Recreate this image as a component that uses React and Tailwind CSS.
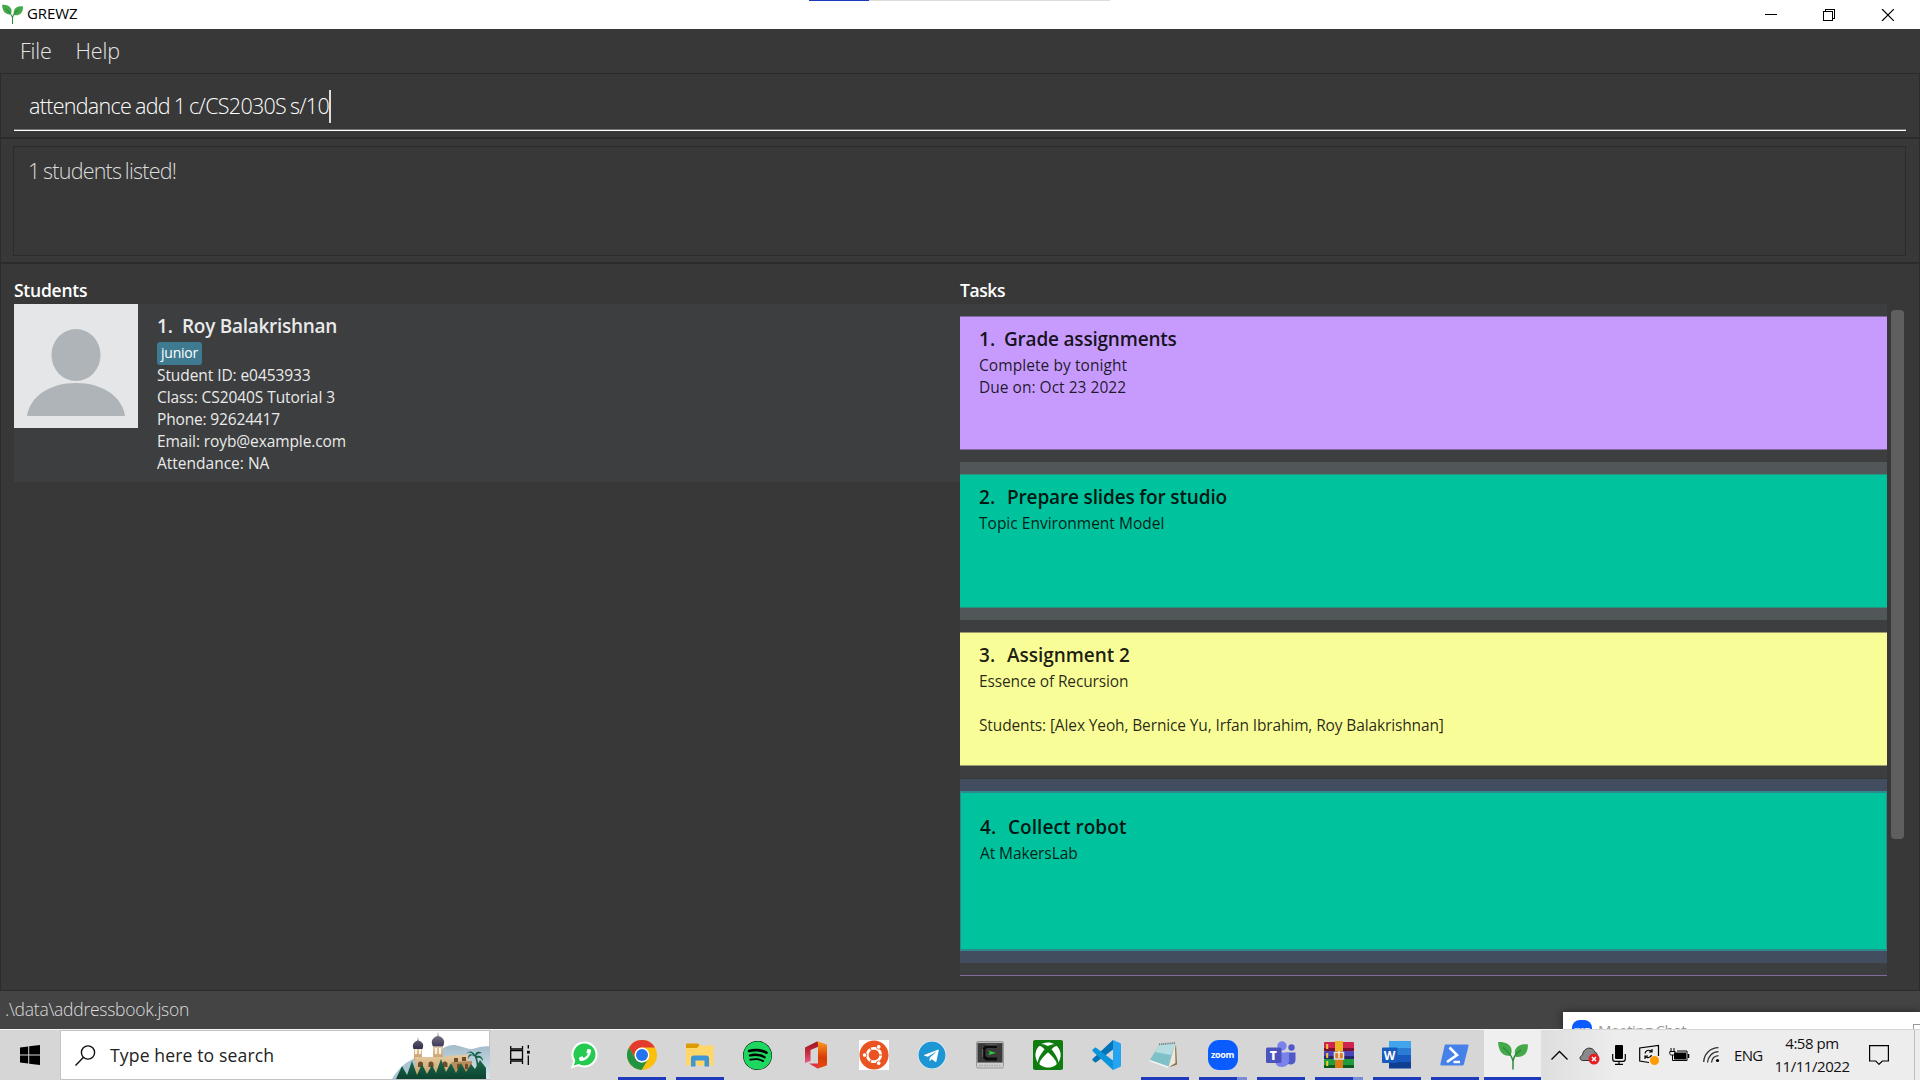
import React from "react";
import { FaXbox, FaSpotify, FaTelegram, FaUbuntu, FaPhoneAlt } from "react-icons/fa";

function Sprout({ size }) {
  return (
    <svg width={size} height={size} viewBox="0 0 30 30" fill="none">
      <path d="M0 1C6 .4 11.500 2.500 13.200 7c1 3 .2 5.500-.8 8C6.500 14.800.800 13 0 1Z" fill="#45a94c" />
      <path d="M30 3.500C23 2.500 18.500 5 17 9.500c-.6 2.400 0 4.500.8 6.500C25.500 16.500 30 13 30 3.500Z" fill="#45a94c" />
      <path d="M5 6.500c4.500 3.500 9 8.500 10 13.500v8.500M23 9c-4 2.200-7 6-8 11" stroke="#2f8a3d" strokeWidth="1.500" />
    </svg>
  );
}

function WhatsApp() {
  return (
    <div className="relative flex h-7 w-7 items-center justify-center">
      <svg width="28" height="28" viewBox="0 0 28 28" className="absolute inset-0">
        <path d="M14.500.5a13 13 0 1 1-6 24.500L1 27.500l2.200-7.500A13 13 0 0 1 14.500.5Z" fill="#fff" />
        <path d="M14.500 2.500a11 11 0 1 1-5.600 20.500l-5 1.500 1.400-5A11 11 0 0 1 14.500 2.500Z" fill="#25cb50" />
      </svg>
      <FaPhoneAlt size={12} className="relative left-[1px] -scale-x-100 text-white" />
    </div>
  );
}

function Chrome() {
  return (
    <svg width="30" height="30" viewBox="0 0 30 30">
      <circle cx="15" cy="15" r="15" fill="#fbbf0c" />
      <path d="M2 7.500A15 15 0 0 1 28 7.500H15A7.500 7.500 0 0 0 8.500 18.700Z" fill="#e33b2e" />
      <path d="M2 7.500A15 15 0 0 0 14.500 30L21.500 18.700A7.500 7.500 0 0 1 8.500 18.700Z" fill="#229342" />
      <circle cx="15" cy="15" r="7.400" fill="#fff" />
      <circle cx="15" cy="15" r="6" fill="#2374ee" />
    </svg>
  );
}

function Explorer() {
  return (
    <svg width="28" height="24" viewBox="0 0 28 24">
      <path d="M0 1.500C0 .7.700.5 1.500.5H12l1.500 1.500-2 3.500H0Z" fill="#dd9b02" />
      <path d="M0 5h11l2.500-2.500H27.500V22.500H0Z" fill="#ffd667" />
      <path d="M5 23.500V15c0-1.500 1-2.500 2.500-2.500h13c1.500 0 2.500 1 2.500 2.500v8.500h-4.500v-6H9.500v6Z" fill="#3d96d8" />
    </svg>
  );
}

function Office() {
  return (
    <svg width="24" height="28" viewBox="0 0 24 28">
      <defs>
        <linearGradient id="officeLeft" x1="0" y1="0" x2="0" y2="1">
          <stop offset="0" stopColor="#9c1422" />
          <stop offset=".5" stopColor="#c42a3a" />
          <stop offset="1" stopColor="#ec5a8a" />
        </linearGradient>
        <linearGradient id="officeRight" x1="0" y1="0" x2="0" y2="1">
          <stop offset="0" stopColor="#ff9a1e" />
          <stop offset=".6" stopColor="#d93a07" />
          <stop offset="1" stopColor="#e64a12" />
        </linearGradient>
      </defs>
      <path d="M1 6.500 13.500.2 16 5 6.500 9v11L1 22Z" fill="url(#officeLeft)" />
      <path d="M13.500.2 22 3.200c.8.300 1 .8 1 1.500v18.500c0 .8-.3 1.300-1 1.500L14 27.500V5Z" fill="url(#officeRight)" />
      <path d="M5 22.500H14v5.200Z" fill="#e0304a" />
    </svg>
  );
}

function Cygwin() {
  return (
    <svg width="28" height="28" viewBox="0 0 28 28">
      <rect x=".5" y=".5" width="27" height="26.500" rx="1.500" fill="#cfcfcf" stroke="#9b9b9b" />
      <rect x="1.500" y="2" width="25" height="19.500" fill="#3a3a3a" stroke="#777" strokeWidth=".5" />
      <path d="M21 5.500H10.500L8 8v7.500l2.500 2.500H21" fill="none" stroke="#0b0b0b" strokeWidth="2.800" />
      <path d="M9.500 4H21M6.700 8v8" fill="none" stroke="#8a8a8a" strokeWidth=".7" />
      <path d="M12 9.500 20 12l-8 2 2-2.200Z" fill="#22d83a" />
      <path d="M3 24.500h22" stroke="#aaa" strokeWidth="1.500" strokeDasharray="1.500 1" />
    </svg>
  );
}

function VsCode() {
  return (
    <svg width="30" height="30" viewBox="0 0 30 30">
      <path d="M22 0 2 18.500c-.8.700-.8 1.500 0 2.200l1.500 1.400c.6.500 1.400.5 2 0L24 8Z" fill="#0072b8" />
      <path d="M22 30 2 11.500c-.8-.7-.8-1.500 0-2.200l1.500-1.400c.6-.5 1.400-.5 2 0L24 22Z" fill="#0b94da" />
      <path d="M22 0 29 3c.8.400 1 1 1 1.700v20.600c0 .7-.2 1.300-1 1.700l-7 3Z" fill="#26a4f2" />
    </svg>
  );
}

function Notepad() {
  return (
    <svg width="30" height="28" viewBox="0 0 30 28">
      <path d="M27 3.500 28 23.500 21 26Z" fill="#8a6d45" />
      <path d="M26 2.500 26.500 22 20 26Z" fill="#ece8da" />
      <path d="M10.500 3.500 26 2.500 19.500 25.500.800 19Z" fill="#7fc0c9" />
      <path d="M10.500 3.500 26 2.500 22 14 6 11Z" fill="#b5dde1" />
      <path d="M.800 19 19.500 25.500 19 27 1 20.500Z" fill="#f4f4f0" />
      <path d="M10 3.300 26 2" stroke="#6c7a7c" strokeWidth="1.800" strokeDasharray="1 .9" />
    </svg>
  );
}

function Zoom() {
  return (
    <div className="flex h-[30px] w-[30px] items-center justify-center rounded-[11px] bg-[#0b5cff] pb-[2px] font-['Open_Sans',sans-serif] text-[9px] font-bold leading-none tracking-[-0.3px] text-white">
      zoom
    </div>
  );
}

function Teams() {
  return (
    <div className="relative h-7 w-[30px]">
      <svg width="30" height="28" viewBox="0 0 30 28" className="absolute inset-0">
        <circle cx="25.500" cy="6.500" r="3.200" fill="#5059c9" />
        <path d="M20 11.500h9.500V19a4.800 4.800 0 0 1-9 2Z" fill="#5059c9" />
        <circle cx="16" cy="5" r="4.700" fill="#7b83eb" />
        <path d="M9 11.500H23V20a7.200 7.200 0 0 1-14 1Z" fill="#7b83eb" />
        <rect y="6.500" width="15.500" height="15.500" rx="1.500" fill="#4b53bc" />
      </svg>
      <span className="absolute left-[4px] top-[7px] font-['Open_Sans',sans-serif] text-[12px] font-extrabold leading-[15px] text-white">T</span>
    </div>
  );
}

function WinRar() {
  return (
    <svg width="30" height="28" viewBox="0 0 30 28">
      <rect y="1" width="30" height="9" rx="1" fill="#cf2450" />
      <path d="M0 7h30v3H0Z" fill="#7d1030" />
      <rect y="10" width="30" height="8" rx="1" fill="#4b46b8" />
      <path d="M0 15h30v3H0Z" fill="#28256f" />
      <rect y="18" width="30" height="9" rx="1" fill="#1f9c3c" />
      <path d="M0 24h30v3H0Z" fill="#0c5a20" />
      <path d="M3.200 3v5M3.200 12v5M3.200 20v5" stroke="#f5c931" strokeWidth="2" />
      <rect x="11" y="0" width="8" height="27" fill="#d97a16" />
      <rect x="11" y="0" width="8" height="10" fill="#ecb325" />
      <rect x="10.500" y="11.500" width="9" height="6.500" fill="none" stroke="#dedede" strokeWidth="1.500" />
      <path d="M15 10v7" stroke="#eee" strokeWidth="1.500" />
    </svg>
  );
}

function Word() {
  return (
    <div className="relative h-7 w-[29px]">
      <svg width="29" height="28" viewBox="0 0 29 28" className="absolute inset-0">
        <rect x="7" width="22" height="7" fill="#41a5ee" />
        <rect x="7" y="7" width="22" height="7" fill="#2b7cd3" />
        <rect x="7" y="14" width="22" height="7" fill="#185abd" />
        <rect x="7" y="21" width="22" height="6.500" fill="#103f91" />
        <rect y="6.500" width="15.500" height="15.500" rx="1" fill="#185abd" />
      </svg>
      <span className="absolute left-[1.500px] top-[7px] font-['Open_Sans',sans-serif] text-[12px] font-bold leading-[15px] text-white">W</span>
    </div>
  );
}

function PowerShell() {
  return (
    <svg width="29" height="22" viewBox="0 0 29 22">
      <path d="M6 .5H27.200c1 0 1.500.7 1.300 1.500L24 20c-.2.900-.8 1.400-1.700 1.400H1.500C.6 21.400.200 20.800.400 20L4.500 2C4.700 1 5.200.5 6 .5Z" fill="#4681ea" />
      <path d="m9.500 3.500 7.500 7.500L7 18" fill="none" stroke="#fff" strokeWidth="2.600" />
      <path d="M13.500 18h6.500" stroke="#fff" strokeWidth="2.400" />
    </svg>
  );
}

const apps = [
  { icon: <WhatsApp /> },
  { icon: <Chrome />, open: true },
  { icon: <Explorer />, open: true },
  {
    icon: (
      <div className="rounded-full bg-black">
        <FaSpotify size={29} className="text-[#1ed760]" />
      </div>
    ),
  },
  { icon: <Office /> },
  {
    icon: (
      <div className="bg-[linear-gradient(#fff,#fff)]">
        <FaUbuntu size={30} className="text-[#e95420]" />
      </div>
    ),
  },
  {
    icon: (
      <div className="rounded-full bg-white">
        <FaTelegram size={28} className="text-[#1e96d4]" />
      </div>
    ),
  },
  { icon: <Cygwin /> },
  {
    icon: (
      <div className="flex h-[30px] w-[30px] items-center justify-center rounded-[2px] bg-[#107c10]">
        <FaXbox size={26} className="text-white" />
      </div>
    ),
  },
  { icon: <VsCode /> },
  { icon: <Notepad />, open: true },
  { icon: <Zoom />, open: true, many: true },
  { icon: <Teams />, open: true },
  { icon: <WinRar />, open: true, many: true },
  { icon: <Word />, open: true },
  { icon: <PowerShell />, open: true },
];

function Castle() {
  return (
    <svg width="98" height="48" viewBox="0 0 98 48">
      <defs>
        <linearGradient id="stone" x1="0" y1="0" x2="0" y2="1">
          <stop offset="0" stopColor="#e6cba0" />
          <stop offset="1" stopColor="#c39a66" />
        </linearGradient>
        <linearGradient id="dome" x1="0" y1="0" x2="0" y2="1">
          <stop offset="0" stopColor="#8a8694" />
          <stop offset="1" stopColor="#352d4c" />
        </linearGradient>
        <linearGradient id="hill" x1="0" y1="0" x2="0" y2="1">
          <stop offset="0" stopColor="#a3bccb" />
          <stop offset="1" stopColor="#dbe6ec" />
        </linearGradient>
        <linearGradient id="tree" x1="0" y1="0" x2="0" y2="1">
          <stop offset="0" stopColor="#1b6a4b" />
          <stop offset="1" stopColor="#0a3c2b" />
        </linearGradient>
      </defs>
      <path d="M45 22C52 16 58 13 65 14.500c7 1.500 12 5 19 2.500 6-1.500 11-2.500 15-1v32H45Z" fill="url(#hill)" />
      <path d="M0 48C6 38 14 30 24 27l20 21Z" fill="#a9c4d2" />
      <path d="M22 17h8v12h-8ZM41 16h10v13H41Z" fill="url(#stone)" />
      <path d="M24 18v5M28 18v5M44 17v6M48 17v6" stroke="#fff" strokeWidth="1.600" />
      <path d="M21.500 18c-1.500-4-.5-6.500 4-8.500l.5-3.500.5 3.500c5 2 5.500 4.500 4 8.500ZM41 15.500c-2-4-2-8.500 4.500-10.500L46 0l.5 5c6.500 2 6.500 6.500 4.500 10.500Z" fill="url(#dome)" />
      <path d="M23 26h31v-1l22-1.500v24.500H23Z" fill="url(#stone)" />
      <path d="M60 31l20-1v18H60Z" fill="#b98e5e" />
      <path d="M26 36v-3a2.500 2.500 0 0 1 5 0v3ZM36.500 36v-3a2.500 2.500 0 0 1 5 0v3ZM50.500 36v-3a2.500 2.500 0 0 1 5 0v3ZM62 27h4v4h-4ZM70 26h4v4h-4ZM65 38v-4a1.500 1.500 0 0 1 3 0v4ZM73 38v-4a1.500 1.500 0 0 1 3 0v4Z" fill="#6d4c2f" />
      <path d="M84 46c1.500-8 1-14-1-20-3-3-5-2-7 2 0-4 2-6 5-4-2-3-4-3-7-1 3-4 7-3 9 1 1-4 4-4 7-2-3 0-5 1-6 3 4-1 7 1 7 5-2-3-3-4-6-3 2 6 2 13 1 19Z" fill="#126048" />
      <path d="m4 48 6-13 5 9 5-14 5 14 5-11 5 10 5-9 4 8 5-14 5 13 5-9 5 10 5-10 5 9 5-8 4 5 5-9 6 8v15Z" fill="url(#tree)" />
    </svg>
  );
}

function TaskCell({ cell, card, children, tall }) {
  return (
    <li className={"py-3 " + cell}>
      <article className={(tall ? "h-40 border-2 border-x pt-[21px] pl-[19px] border-[#2c8a8f] " : "h-[134px] border-y pt-[9px] pl-[19px] ") + card}>{children}</article>
    </li>
  );
}

function TaskTitle({ n, gap, title, spacing }) {
  return (
    <h3 className="flex h-[26px] text-[19px] font-semibold leading-[26px] text-black/90">
      <span className={gap}>{n}.</span>
      <span className={spacing}>{title}</span>
    </h3>
  );
}

const line = "h-[22px] text-[15.5px] leading-[22px] whitespace-pre";

export default function App() {
  return (
    <div className="relative flex h-[1080px] w-[1920px] flex-col overflow-hidden bg-[#383838] font-['Open_Sans','Noto_Sans',sans-serif] whitespace-nowrap">
      {/* Title bar */}
      <header className="relative flex h-[29px] items-center bg-white pl-[2px] text-black">
        <Sprout size={21} />
        <span className="ml-[4px] text-[15px] leading-[27px] pb-[2px] tracking-[-0.1px]">GREWZ</span>
        <div className="absolute left-[809px] top-0 flex">
          <div className="h-px w-[60px] bg-[#1d39c0]" />
          <div className="h-px w-[241px] bg-[#dcdcdc]" />
        </div>
        <svg className="ml-auto mr-[26px]" width="129" height="12" viewBox="0 0 129 12" fill="none" stroke="#000" shapeRendering="crispEdges">
          <path d="M0 5.500h12" />
          <path d="M58.500 2.500h9v9h-9ZM60.500 2.500v-2h9v9h-2" />
          <path d="m117 0 12 12M129 0l-12 12" shapeRendering="auto" strokeWidth="1.200" />
        </svg>
      </header>

      {/* Menu */}
      <nav className="flex h-11 gap-[24px] pl-[20px] text-[21.5px] font-light leading-[44px] text-[#e6e6e6]">
        <span className="tracking-[-0.2px]">File</span>
        <span className="tracking-[-0.15px]">Help</span>
      </nav>

      {/* Command box */}
      <section className="h-[65px] border border-[#2b2b2b] px-[13px] pt-[16px]">
        <div className="flex h-10 border-b border-[#757575] pl-[15px]">
          <span className="mt-px h-[30px] text-[21.5px] font-light leading-[30px] tracking-[-0.7px] [word-spacing:-1.100px] text-white">attendance add 1 c/CS2030S s/10</span>
          <span className="h-[33px] w-[1.500px] bg-[#ddd]" />
        </div>
        <div className="h-px bg-white" />
      </section>

      {/* Result display */}
      <section className="h-[125px] border border-[#2b2b2b] pl-3 pr-[13px] pt-[7px]">
        <div className="h-[110px] border border-[#2b2b2b] pl-[14px] pt-[9px] text-[21.5px] font-light leading-[30px] tracking-[-0.78px] [word-spacing:-1.200px] text-[#dcdcdc]">
          1 students listed!
        </div>
      </section>

      {/* Lists */}
      <main className="flex h-[728px] border border-[#2b2b2b] pl-[13px] pt-[13px] pr-[13px]">
        <section className="w-[946px]">
          <h2 className="h-[27px] text-[17.5px] font-semibold leading-[27px] tracking-[-0.25px] text-white">Students</h2>
          <article className="flex h-[178px] bg-[#3c3e3f]">
            <svg width="124" height="124" viewBox="0 0 124 124">
              <rect width="124" height="124" fill="#e4e6e7" />
              <ellipse cx="62" cy="51" rx="24.500" ry="26" fill="#aeb4b7" />
              <path d="M13 112C16 92 36 79 62 79s46 13 49 33Z" fill="#aeb4b7" />
            </svg>
            <div className="pl-[19px] pt-[9px] text-[#eaeaea]">
              <h3 className="flex h-[26px] text-[19px] font-semibold leading-[26px]">
                <span className="w-[25px]">1.</span>
                <span className="tracking-[-0.28px]">Roy Balakrishnan</span>
              </h3>
              <div className="mt-[3px] flex h-[23px] w-[45px] justify-center rounded-[3px] bg-[#3e7b91] text-[14px] leading-[22px] tracking-[-0.2px] text-white">junior</div>
              <p className={line + " -mt-px tracking-[-0.08px]"}>Student ID: e0453933</p>
              <p className={line + " tracking-[-0.08px]"}>Class: CS2040S Tutorial 3</p>
              <p className={line + " tracking-[-0.16px]"}>Phone: 92624417</p>
              <p className={line + " tracking-[-0.1px]"}>Email: royb@example.com</p>
              <p className={line}>Attendance: NA</p>
            </div>
          </article>
        </section>

        <section className="w-[927px]">
          <h2 className="h-[27px] text-[17.5px] font-semibold leading-[27px] tracking-[-0.4px] text-white">Tasks</h2>
          <ul className="h-[672px] overflow-hidden text-black/85">
            <TaskCell cell="h-[158px] bg-[#3c3e3f]" card="bg-[#c79bfd] border-[#83699f]">
              <TaskTitle n="1" gap="w-[25px]" title="Grade assignments" spacing="tracking-[-0.2px]" />
              <p className={line + " mt-[2px] tracking-[0.07px]"}>Complete by tonight</p>
              <p className={line + " tracking-[0.02px]"}>Due on: Oct 23 2022</p>
            </TaskCell>
            <TaskCell cell="h-[158px] bg-[#515658]" card="bg-[#00c29c] border-[#2a8f7c]">
              <TaskTitle n="2" gap="w-[28px]" title="Prepare slides for studio" spacing="tracking-[-0.15px]" />
              <p className={line + " mt-[2px] tracking-[0.01px]"}>Topic Environment Model</p>
            </TaskCell>
            <TaskCell cell="h-[158px] bg-[#3c3e3f]" card="bg-[#f9fd98] border-[#9a9d69]">
              <TaskTitle n="3" gap="w-[28px]" title="Assignment 2" spacing="tracking-[-0.04px]" />
              <p className={line + " mt-[2px] tracking-[-0.13px]"}>Essence of Recursion</p>
              <p className={line + " mt-[22px] tracking-[-0.13px]"}>Students: [Alex Yeoh, Bernice Yu, Irfan Ibrahim, Roy Balakrishnan]</p>
            </TaskCell>
            <TaskCell tall cell="h-[185px] border-t border-[#373737] bg-[#424d5f]" card="bg-[#00c29c]">
              <TaskTitle n="4" gap="w-[28px]" title="Collect robot" spacing="tracking-[0.05px]" />
              <p className={line + " mt-[2px] tracking-[-0.09px]"}>At MakersLab</p>
            </TaskCell>
            <TaskCell cell="h-[158px] bg-[#3c3e3f]" card="bg-[#c79bfd] border-[#83699f]" />
          </ul>
        </section>
        <div className="ml-[3.500px] mt-[33px] h-[529px] w-[13.500px] rounded-[4px] bg-[#5f5f5f]" />
      </main>

      {/* Status bar */}
      <footer className="h-[38px] bg-[#444444] pl-[5px] text-[17.5px] font-light leading-[37px] tracking-[-0.26px] text-[#dedede]">.\data\addressbook.json</footer>

      {/* Meeting chat window peeking above the taskbar */}
      <div className="absolute left-[1563px] top-[1012px] flex h-[18px] w-[357px] overflow-hidden bg-white pl-[9px] pt-[8px] shadow-[0_0_8px_rgba(0,0,0,0.5)]">
        <span className="flex h-5 w-5 justify-center rounded-[8px] bg-[#0b5cff] text-[6px] font-bold leading-[18px] text-white">zoom</span>
        <span className="ml-[6px] text-[15px] leading-[20px] tracking-[-0.4px] text-[#999]">Meeting Chat</span>
        <div className="ml-auto mr-[46px] mt-[9px] h-px w-3 bg-[#999]" />
        <div className="mt-[4px] h-4 w-[7px] border-l border-t border-[#999]" />
      </div>

      {/* Taskbar */}
      <div className="relative flex h-[51px] bg-[#d6d6d6]">
        <div className="absolute left-0 top-0 h-px w-[1563px] bg-[#f4f4f4]" />
        <div className="flex w-[60px] items-center justify-center pt-px">
          <svg width="20" height="20" viewBox="0 0 20 20">
            <path d="m0 2.600 8.200-1.100v8H0ZM9.200 1.300 20 0v9.500H9.200ZM0 10.500h8.200v8L0 17.400ZM9.200 10.500H20V20L9.200 18.700Z" />
          </svg>
        </div>
        <div className="mt-px flex w-[430px] items-center border border-[#c4c4c4] bg-white pl-[14px] text-[#222]">
          <svg width="21" height="21" viewBox="0 0 21 21" fill="none" stroke="#111" strokeWidth="1.400">
            <circle cx="13" cy="7.500" r="6.600" />
            <path d="M8.500 12.300.500 20.500" />
          </svg>
          <span className="ml-[14px] text-[17.6px] leading-[48px] tracking-[0.12px]">Type here to search</span>
          <div className="-mr-px ml-auto self-end">
            <Castle />
          </div>
        </div>
        <div className="flex w-[64.500px] items-center pl-[20px]">
          <svg width="20" height="20" viewBox="0 0 20 20" fill="none" stroke="#000" strokeWidth="1.300">
            <path d="M.7 1v3h11.800V1M.7 19v-3h11.800v3M.7 5.700h11.800v8.600H.7ZM18.300 0v3.500M18.300 10.500V20" />
            <path d="M17 5.800h2.800v2.800H17Z" fill="#000" stroke="none" />
          </svg>
        </div>
        {apps.map((app, i) => (
          <div key={i} className="relative flex w-[58.1px] items-center justify-center pt-px">
            {app.icon}
            {app.open && (
              <div className="absolute bottom-0 left-[5.500px] flex h-[3px] w-12">
                <div className="flex-1 bg-[#1f3bbd]" />
                {app.many && <div className="w-[10px] bg-[#7a8cd8]" />}
              </div>
            )}
          </div>
        ))}
        <div className="flex w-[57px] flex-col items-center border-b-[3px] border-[#1f3bbd] bg-[#efefef] pt-[12px]">
          <Sprout size={30} />
        </div>

        {/* System tray */}
        <div className="mt-px flex flex-1 items-center bg-linear-to-r from-[#dedede] to-[#ededed] to-20% text-[#111]">
          <svg className="ml-[10px]" width="17" height="10" viewBox="0 0 17 10" fill="none" stroke="#000" strokeWidth="1.300">
            <path d="m.5 9.500 8-8 8 8" />
          </svg>
          <svg className="ml-[11px] mt-px" width="21" height="18" viewBox="0 0 21 18">
            <path d="M3.500 13.500C.5 13 0 9.500 3.500 8 4 3.500 7.500.700 11 1.200c3 .3 4 2 4.600 3.800 2.500.5 3 3 2.400 5l-4 3.500Z" fill="#8a8a8a" stroke="#333" />
            <circle cx="15" cy="12" r="5.500" fill="#e32028" />
            <path d="m13 10 4 4m0-4-4 4" stroke="#fff" strokeWidth="1.500" />
          </svg>
          <svg className="ml-[12px]" width="14" height="20" viewBox="0 0 14 20">
            <rect x="3" width="8" height="14" rx="1" />
            <path d="M.7 9v5c0 1.500 1 2.300 2.300 2.300h8c1.300 0 2.300-.8 2.300-2.300V9M7 16v3M3 19.300h8" fill="none" stroke="#000" strokeWidth="1.200" />
          </svg>
          <svg className="ml-[13px]" width="22" height="22" viewBox="0 0 22 22" fill="none" stroke="#000" strokeWidth="1.200">
            <path d="M10 18.500.700 17V4L19.500 1.500V12" />
            <path d="M6 9.500a3.800 3.800 0 0 1 6-2.500l1 1M13 5v3h-3M12.500 11a3.800 3.800 0 0 1-5.500 2L6 12M6 15v-3h3" />
            <circle cx="15.500" cy="16.500" r="4.500" fill="#ff9a00" stroke="none" />
          </svg>
          <svg className="ml-[8px]" width="21" height="14" viewBox="0 0 21 14" fill="none" stroke="#000">
            <path d="M2 0v3M5 0v3M.8 3.500h5.400v2c0 1-.7 1.500-1.700 1.500H2.500C1.500 7 .8 6.500.8 5.500ZM3.500 7v5.500H18V3H8" />
            <rect x="5.500" y="5" width="11" height="6" fill="#000" />
            <path d="M19.500 6v4" strokeWidth="1.500" />
          </svg>
          <svg className="ml-[13px]" width="17" height="16" viewBox="0 0 17 16" fill="none" stroke="#000" strokeWidth="1.300">
            <path d="M.7 15C1 7 7 1 15.500.700M4.500 15.500C5 9.500 9 5 15.500 4.700M8.500 15.500C9 11.500 11.500 9 15.500 8.700" stroke="#333" />
            <circle cx="14.500" cy="13.500" r="1.600" fill="#000" stroke="none" />
          </svg>
          <span className="ml-[14px] w-[29px] text-[15px] leading-[20px] tracking-[-0.7px]">ENG</span>
          <div className="ml-[10px] flex w-[78px] flex-col items-center text-[15px] leading-[23px] tracking-[-0.45px]">
            <span>4:58 pm</span>
            <span>11/11/2022</span>
          </div>
          <svg className="ml-[18px]" width="20" height="20" viewBox="0 0 20 20" fill="none" stroke="#000" strokeWidth="1.200">
            <path d="M.6.600h18.800v15.400h-6L10 19.300 6.800 16H.6Z" />
          </svg>
          <div className="ml-auto mr-[5px] h-full w-px bg-[#bdbdbd]" />
        </div>
      </div>
    </div>
  );
}
